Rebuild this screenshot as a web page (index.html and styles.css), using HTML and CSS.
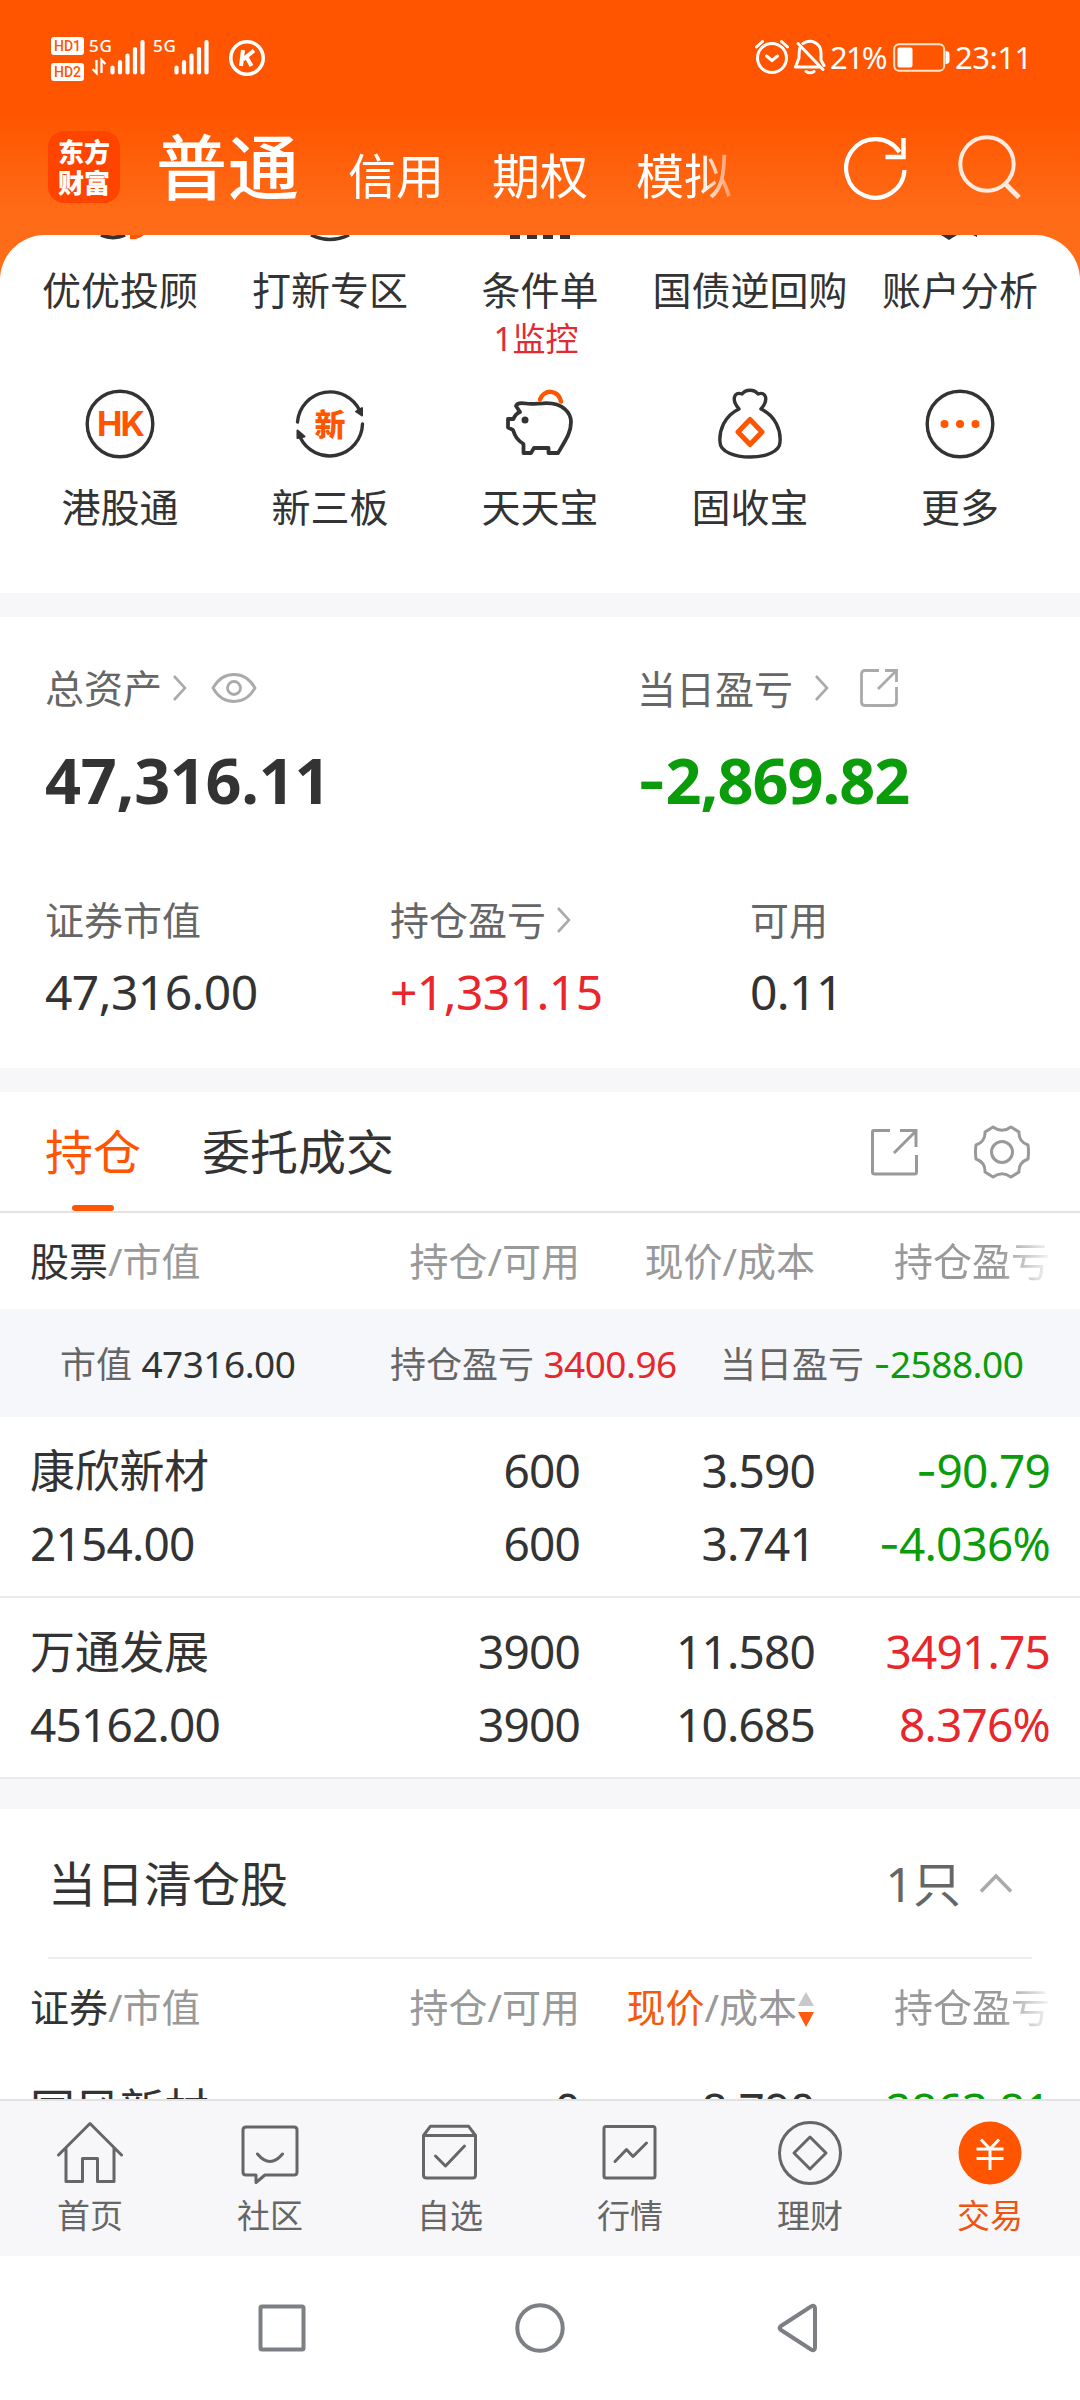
FILE: index.html
```html
<!DOCTYPE html>
<html lang="zh-CN">
<head>
<meta charset="utf-8">
<title>交易</title>
<link rel="stylesheet" href="styles.css">
</head>
<body>
<div class="screen">
  <header class="header">
    <div class="status">
      <div class="hd"><span>HD1</span><span>HD2</span></div>
      <svg class="sig" width="58" height="48" viewBox="0 0 58 48" fill="none" stroke="#fff">
        <text class="g5" x="0" y="17.500">5G</text>
        <path d="M7.500 26v13l-4-4M12.500 39V26l4 4" stroke-width="2.300"/>
        <path d="M23.500 33.500v5M31 28v10.500M38.500 21.500v17M46 15v23.500M53.500 8v30.500" stroke-width="4.200" stroke-linecap="round"/>
      </svg>
      <svg class="sig sig-2" width="58" height="48" viewBox="0 0 58 48" fill="none" stroke="#fff">
        <text class="g5" x="0" y="17.500">5G</text>
        <path d="M23.500 33.500v5M31 28v10.500M38.500 21.500v17M46 15v23.500M53.500 8v30.500" stroke-width="4.200" stroke-linecap="round"/>
      </svg>
      <svg class="kicon" width="38" height="38" viewBox="0 0 38 38" fill="none" stroke="#fff">
        <circle cx="19" cy="19" r="16.200" stroke-width="3.600"/>
        <path d="M15 11l-2 16M26 11.500l-11 9M18.500 18l5 9" stroke-width="4"/>
      </svg>
      <div class="status-right">
        <svg width="36" height="36" viewBox="0 0 36 36" fill="none" stroke="#fff" stroke-width="3" stroke-linecap="round">
          <circle cx="18" cy="19" r="14.500"/><path d="M2.500 8l6-5.500M33.500 8l-6-5.500M12.500 17l5.500 4.500 5.500-4.500"/>
        </svg>
        <svg class="bell" width="34" height="36" viewBox="0 0 34 36" fill="none" stroke="#fff" stroke-width="3" stroke-linecap="round" stroke-linejoin="round">
          <path d="M10 4.500C18-.500 28 4 28 14v7l3 5.500M7 8.500c-1 3-1 6-1 10.500L2.500 28H26M5 4.500l25 26M13 32.500q4 2.500 8 0"/>
        </svg>
        <span class="pct">21%</span>
        <svg class="bat" width="58" height="30" viewBox="0 0 58 30" fill="none">
          <rect x="1.200" y="1.200" width="50" height="26.500" rx="5" stroke="#ffe3c8" stroke-width="2"/>
          <rect x="4.500" y="4.500" width="15" height="20" rx="2" fill="#fff"/>
          <path d="M52.500 8q4 0 4 3v7q0 3-4 3z" fill="#fff"/>
        </svg>
        <span class="time">23:11</span>
      </div>
    </div>
    <div class="titlebar">
      <div class="logo"><span>东方</span><span>财富</span></div>
      <nav class="accounts"><span class="cur">普通</span><span>信用</span><span>期权</span><span>模拟</span></nav>
      <svg class="refresh" width="66" height="68" viewBox="0 0 66 68" fill="none" stroke="#fff" stroke-width="4.200">
        <path d="M60.500 36A29.200 29.200 0 1 1 55.500 18"/><path d="M59.500 4v19H41.500" stroke-width="4.500"/>
      </svg>
      <svg class="search" width="66" height="68" viewBox="0 0 66 68" fill="none" stroke="#ffeadf" stroke-width="4">
        <circle cx="30" cy="31" r="26.700"/><path d="M48.500 51l13.500 13.500" stroke-width="5"/>
      </svg>
    </div>
  </header>

  <section class="panel">
    <div class="cut-icons">
      <div><svg width="70" height="6" viewBox="0 0 70 6" fill="none"><path d="M16 0q12 5 24 0" stroke="#333" stroke-width="4"/><path d="M45 0h14q-6 5-14 4z" fill="#ff5500"/></svg></div>
      <div><svg width="70" height="8" viewBox="0 0 70 8" fill="none"><path d="M16 0q19 9 38 0" stroke="#333" stroke-width="3.500"/></svg></div>
      <div><svg width="70" height="6" viewBox="0 0 70 6" fill="none"><path d="M5 2h10M22 2h10M38 2h10M55 2h10" stroke="#333" stroke-width="4"/></svg></div>
      <div></div>
      <div><svg width="70" height="6" viewBox="0 0 70 6"><path d="M16 0l8 5 8-5zM48 0h4v2z" fill="#333"/></svg></div>
    </div>
    <div class="labels row1"><div>优优投顾</div><div>打新专区</div><div>条件单<em>1监控</em></div><div>国债逆回购</div><div>账户分析</div></div>
    <div class="icons">
      <div><svg width="76" height="76" viewBox="-38 -38 76 76" fill="none"><circle r="32.800" stroke="#333" stroke-width="3.400"/><text class="hk" x="0" y="12" text-anchor="middle" fill="#ff5500">HK</text></svg></div>
      <div><svg width="76" height="76" viewBox="-38 -38 76 76" fill="none"><path d="M-32.500-2A32.800 32.800 0 0 1 30-13M32.500 0A32.800 32.800 0 0 1-30 13" stroke="#333" stroke-width="3.400" stroke-linecap="round"/><path d="M26-12.500L32-16V-8.500zM-25.500 12.500L-32.500 6.500V14z" fill="#333" stroke="#333" stroke-width="2" stroke-linejoin="round"/><text class="xin" x="0" y="12" text-anchor="middle" fill="#ff5500">新</text></svg></div>
      <div><svg width="76" height="76" viewBox="-38 -38 76 76" fill="none" stroke="#333" stroke-width="3.800" stroke-linejoin="round" stroke-linecap="round"><path d="M-20-12l-4-6q1-4 10-2.500c5 1 11 0 17-.200C24-22 31-10 31-2 31 8 27 14 18 29H8.500v-5H-6l-3 5H-16.500V20C-23 16-25 12-27 6l-5-2.500V-5h5.500c1-3 4-6 6.500-7z"/><circle cx="-15" cy="-4" r="3.500" fill="#333" stroke="none"/><path d="M0-24.500C4-35 18-35 21-22.500" stroke="#ff5500" stroke-width="4.500"/></svg></div>
      <div><svg width="76" height="76" viewBox="-38 -38 76 76" fill="none" stroke="#333" stroke-width="3.400" stroke-linejoin="round"><path d="M-11-15c-8-9-5-18 3-15 4-5 12-5 16 0 8-3 11 6 3 15C26-8 31 7 30 18c0 20-60 20-60 0C-31 7-26-8-11-15z"/><path d="M0-4.500L12 8 0 20.500-12 8z" stroke="#ff5500" stroke-width="5"/></svg></div>
      <div><svg width="76" height="76" viewBox="-38 -38 76 76" fill="#ff5500"><circle r="32.800" fill="none" stroke="#333" stroke-width="3.400"/><circle cx="-15.500" r="4"/><circle r="4"/><circle cx="15.500" r="4"/></svg></div>
    </div>
    <div class="labels row2"><div>港股通</div><div>新三板</div><div>天天宝</div><div>固收宝</div><div>更多</div></div>
  </section>

  <section class="assets">
    <div class="two">
      <div>
        <div class="cap"><span>总资产</span><svg class="chev c1" width="16" height="28" viewBox="0 0 16 28"><path d="M2 2l11 12L2 26"/></svg>
          <svg class="eye" width="46" height="34" viewBox="0 0 46 34" fill="none" stroke="#aaa" stroke-width="2.800"><path d="M2 17C12-1 34-1 44 17 34 35 12 35 2 17z"/><circle cx="23" cy="17" r="6.500"/></svg></div>
        <div class="big total">47,316.11</div>
      </div>
      <div>
        <div class="cap cap-day"><span>当日盈亏</span><svg class="chev c2" width="16" height="28" viewBox="0 0 16 28"><path d="M2 2l11 12L2 26"/></svg>
          <svg class="share1" width="40" height="40" viewBox="0 0 40 40" fill="none" stroke="#aaa" stroke-width="2.800"><path d="M20 2.500H6Q2.500 2.500 2.500 6v28q0 3.500 3.500 3.500h28q3.500 0 3.500-3.500V19M26 2.500h11.500V14M37 3L19 21"/></svg></div>
        <div class="big green day"><u>-</u>2,869.82</div>
      </div>
    </div>
    <div class="three">
      <div><div class="cap"><span>证券市值</span></div><div class="mid">47,316.00</div></div>
      <div><div class="cap"><span>持仓盈亏</span><svg class="chev c1" width="16" height="28" viewBox="0 0 16 28"><path d="M2 2l11 12L2 26"/></svg></div><div class="mid red">+1,331.15</div></div>
      <div><div class="cap"><span>可用</span></div><div class="mid">0.11</div></div>
    </div>
  </section>

  <section class="holdings">
    <div class="tabs">
      <span class="tab on">持仓</span><span class="tab">委托成交</span>
      <svg class="share2" width="48" height="48" viewBox="0 0 48 48" fill="none" stroke="#999" stroke-width="3"><path d="M20 2.500H3.500Q2.500 2.500 2.500 4v40q0 2 2 2h40q2 0 2-2V27M30 2.500h16V19M46 3L24 25"/></svg>
      <svg class="gear" width="56" height="56" viewBox="-28 -28 56 56" fill="none" stroke="#999" stroke-width="3" stroke-linejoin="round"><circle r="10.500"/><path d="M-9-25Q0-18.500 9-25L17-20Q16.500-10.500 26-7 27 0 26 7 16.500 10.500 17 20L9 25Q0 18.500-9 25L-17 20Q-16.500 10.500-26 7-27 0-26-7-16.500-10.500-17-20z"/></svg>
    </div>
    <div class="grid thead"><div><b>股票</b>/市值</div><div>持仓/可用</div><div>现价/成本</div><div class="fade">持仓盈亏</div></div>
    <div class="sum"><span>市值 <i>47316.00</i></span><span>持仓盈亏 <i class="red">3400.96</i></span><span>当日盈亏 <i class="green"><u>-</u>2588.00</i></span></div>
    <div class="grid stock"><div><span class="name">康欣新材</span><br>2154.00</div><div>600<br>600</div><div>3.590<br>3.741</div><div class="green"><u>-</u>90.79<br><u>-</u>4.036%</div></div>
    <div class="grid stock"><div><span class="name">万通发展</span><br>45162.00</div><div>3900<br>3900</div><div>11.580<br>10.685</div><div class="red">3491.75<br>8.376%</div></div>
  </section>

  <section class="closed">
    <div class="closed-head"><span>当日清仓股</span><span class="cnt">1只</span><svg width="36" height="22" viewBox="0 0 36 22" fill="none" stroke="#aaa" stroke-width="3.500"><path d="M3 19.500L18 4l15 15.500"/></svg></div>
    <div class="grid thead t2"><div><b>证券</b>/市值</div><div>持仓/可用</div><div><span class="orange">现价</span>/成本<svg class="sort" width="18" height="36" viewBox="0 0 18 36"><path d="M9 0l8 14H1z" fill="#c8c8c8"/><path d="M1 20h16L9 35z" fill="#ff5a10"/></svg></div><div class="fade">持仓盈亏</div></div>
    <div class="grid stock last"><div><span class="name">国风新材</span></div><div>0</div><div>8.790</div><div class="green">2863.81</div></div>
  </section>

  <nav class="bottom">
    <div><svg width="66" height="66" viewBox="-33 -33 66 66"><path d="M-31.500 2L0-29.500 31.500 2M-24-5V28.500H-7.500V5.500h15V28.500H24V-5"/></svg><span>首页</span></div>
    <div><svg width="66" height="66" viewBox="-33 -33 66 66"><path d="M-24-26H24q3 0 3 3V19q0 3-3 3H-5L-14 29.500V22H-24q-3 0-3-3V-23q0-3 3-3zM-12.500 1Q0 16 12.500 1"/></svg><span>社区</span></div>
    <div><svg width="66" height="66" viewBox="-33 -33 66 66"><path d="M-26.500-17.500H25.500V22q0 3-3 3H-23.500q-3 0-3-3zl7-9.300H18.500l7 9.300M-14.500 3l10 10L14.500-7"/></svg><span>自选</span></div>
    <div><svg width="66" height="66" viewBox="-33 -33 66 66"><rect x="-26" y="-26.500" width="51" height="51.500" rx="2"/><path d="M-15 8.500L-3.500-3.500 3 3.500 16.500-10"/></svg><span>行情</span></div>
    <div><svg width="66" height="66" viewBox="-33 -33 66 66"><circle r="30.500"/><path d="M0-16L16 0 0 16-16 0z"/></svg><span>理财</span></div>
    <div class="active"><svg width="66" height="66" viewBox="-33 -33 66 66"><circle class="disc" r="31.500"/><path class="yen" d="M-9-13.500L0-4 9-13.500M-13.500-4h27M-13.500 5.500h27M0-4V17"/></svg><span>交易</span></div>
  </nav>
  <div class="sysnav">
    <svg width="50" height="50" viewBox="0 0 50 50"><rect x="3.500" y="3.500" width="43" height="43" rx="1.500"/></svg>
    <svg width="50" height="50" viewBox="0 0 50 50"><circle cx="25" cy="25" r="22.700"/></svg>
    <svg width="50" height="50" viewBox="0 0 50 50"><path d="M8 23L38 3.500q4-2 4 2v39q0 4-4 2L8 27q-3-2 0-4z"/></svg>
  </div>
</div>
</body>
</html>
```
FILE: styles.css
```css
* { box-sizing: border-box; }
body { margin: 0; background: #fff; color: #333; font-family: "Noto Sans", "Noto Sans CJK SC", sans-serif; }
svg { display: block; flex: none; }
i, em { font-style: normal; }
b { font-weight: 400; color: #333; }
/* minus sign: a wider hyphen than the digit font has */
u { text-decoration: none; font-family: "Inter", sans-serif; line-height: 1; }
.screen { width: 1080px; height: 2400px; overflow: hidden; display: flex; flex-direction: column; background: #f7f7fa; }
.screen > * { flex: none; }
.red { color: #e7272c; }
.green { color: #0a9c0a; }
.orange { color: #f55a0c; }

.header { height: 280px; margin-bottom: -45px; background: linear-gradient(#ff5500 0 115px, #ff6c18 215px); color: #fff; }
.status { height: 116px; padding: 34px 0 0 51px; display: flex; align-items: flex-start; }
.hd { display: grid; gap: 8px; padding-top: 3px; }
.hd span { width: 33px; height: 18px; border-radius: 3px; background: #fff; color: #ff5500; font: 500 14px/18px "Roboto", sans-serif; text-align: center; }
.sig { margin-left: 5px; }
.sig-2 { margin-left: 6px; }
.g5 { font: 500 17px "Noto Sans", sans-serif; fill: #fff; stroke: none; letter-spacing: .8px; }
.kicon { margin: 5px 0 0 17px; }
.status-right { margin: 5px 52px 0 auto; display: flex; align-items: flex-start; font: 31px/36px "Noto Sans", sans-serif; }
.bell { margin-left: 3px; }
.pct { width: 60px; margin-left: 3px; letter-spacing: -1.8px; }
.bat { margin: 4px 4px 0 3px; }
.time { width: 73px; white-space: nowrap; letter-spacing: -.5px; }
.titlebar { display: flex; align-items: flex-start; padding-left: 48px; }
.logo { width: 72px; height: 72px; margin-top: 15px; border-radius: 16px; background: #ff4400; font: 900 26px/31px "Noto Sans CJK SC", sans-serif; text-align: center; padding-top: 4px; }
.logo span { display: block; }
.accounts { width: 580px; height: 110px; margin-left: 36px; display: flex; gap: 48px; align-items: baseline; font: 48px/104px "Noto Sans CJK SC", sans-serif; white-space: nowrap;
  -webkit-mask-image: linear-gradient(90deg, #000 545px, transparent 590px); mask-image: linear-gradient(90deg, #000 545px, transparent 590px); }
.accounts .cur { font-size: 71px; line-height: 94px; font-weight: 500; letter-spacing: 1px; }
.refresh { margin: 18px 0 0 108px; }
.search { margin: 17px 0 0 47px; }

.panel { height: 358px; background: #fff; border-radius: 45px 45px 0 0; }
.cut-icons, .labels, .icons { display: grid; grid-template-columns: repeat(5, 210px); padding: 0 15px; }
.cut-icons { height: 26px; }
.cut-icons > div, .icons > div { display: flex; justify-content: center; align-items: flex-start; }
.labels { font-size: 39px; line-height: 58px; text-align: center; white-space: nowrap; }
.labels em { display: block; color: #e12a33; font-size: 33px; line-height: 40px; margin-left: -8px; }
.row1 { height: 125px; }
.icons { height: 92px; }

.assets { height: 451px; margin-top: 24px; background: #fff; padding: 42px 0 0 45px; }
.cap { height: 58px; display: flex; align-items: center; color: #666; font-size: 39px; white-space: nowrap; }
.cap span { margin-bottom: 5px; }
.cap-day span { margin-bottom: 3px; }
.two { display: grid; grid-template-columns: 592px 1fr; height: 232px; }
.three { display: grid; grid-template-columns: 345px 360px 1fr; }
.chev { fill: none; stroke: #aaa; stroke-width: 2.6px; }
.c1 { margin-left: 10px; }
.c2 { margin-left: 21px; }
.eye { margin-left: 23px; }
.share1 { margin-left: 29px; }
.big { font-weight: 700; font-size: 63px; line-height: 84px; margin-top: 21px; }
.mid { font-size: 48px; line-height: 66px; margin-top: 10px; letter-spacing: -.6px; }
.total { letter-spacing: -.3px; }
.day { letter-spacing: -1px; }

.holdings { margin-top: 24px; height: 687px; background: #fff; }
.tabs { height: 121px; border-bottom: 2px solid #e2e2e2; display: flex; padding: 0 50px 0 45px; font-size: 48px; line-height: 119px; }
.tab { position: relative; margin-right: 61px; }
.on { color: #ff5500; }
.on::after { content: ""; position: absolute; left: 27px; bottom: 0; width: 42px; height: 6px; border-radius: 3px; background: #ff5500; }
.share2 { margin: 36px 56px 0 auto; }
.gear { margin-top: 32px; }
.grid { display: grid; grid-template-columns: 300px 250px 235px 235px; padding-left: 30px; white-space: nowrap; text-align: right; }
.grid > :first-child { text-align: left; }
.thead { height: 96px; line-height: 95px; font-size: 39px; color: #999; }
.thead .fade { text-align: left; padding-left: 79px; overflow: hidden; -webkit-mask-image: linear-gradient(90deg, #000 185px, transparent 240px); mask-image: linear-gradient(90deg, #000 185px, transparent 240px); }
.sum { height: 108px; background: #f5f7fa; display: grid; grid-template-columns: 330px 330px 1fr; padding-left: 60px; font-size: 36px; line-height: 109px; color: #666; white-space: nowrap; }
.sum i { font-size: 37px; letter-spacing: -.5px; }
.sum i:not([class]) { color: #333; }
.stock { height: 181px; border-bottom: 2px solid #ebebeb; padding-top: 17px; font-size: 46px; line-height: 73px; letter-spacing: -.8px; }
.name { font-size: 45px; line-height: 1; letter-spacing: -.3px; }

.closed { margin-top: 30px; height: 290px; overflow: hidden; background: #fff; }
.closed-head { height: 150px; margin: 0 48px; border-bottom: 2px solid #eee; display: flex; align-items: center; font-size: 48px; }
.closed-head span { margin-bottom: 4px; }
.closed-head .cnt { margin-left: auto; margin-right: 17px; color: #666; }
.closed-head svg { margin-right: 18px; }
.t2 > div { display: flex; justify-content: flex-end; }
.t2 > :first-child, .t2 .fade { justify-content: flex-start; }
.sort { margin-top: 33px; }
.last { padding-top: 18px; border: 0; }

.bottom { height: 157px; border-top: 2px solid #e2e2e2; background: #f7f7fa; display: grid; grid-template-columns: repeat(6, 180px); color: #666; font-size: 33px; line-height: 48px; }
.bottom div { display: flex; flex-direction: column; align-items: center; padding-top: 19px; gap: 6px; }
.bottom svg { fill: none; stroke: #666; stroke-width: 3; stroke-linejoin: round; stroke-linecap: round; }
.bottom .active { color: #ee5511; }
.bottom .disc { fill: #ff5500; stroke: none; }
.bottom .yen { stroke: #fff; stroke-linecap: butt; }
.sysnav { height: 144px; background: #fff; padding: 47px 257px 0; display: flex; justify-content: space-between; }
.sysnav svg { fill: none; stroke: #7c7f83; stroke-width: 4; }
.hk { font: 700 34px "Inter", sans-serif; letter-spacing: -2px; }
.xin { font: 900 31px "Noto Sans CJK SC", sans-serif; }
```
